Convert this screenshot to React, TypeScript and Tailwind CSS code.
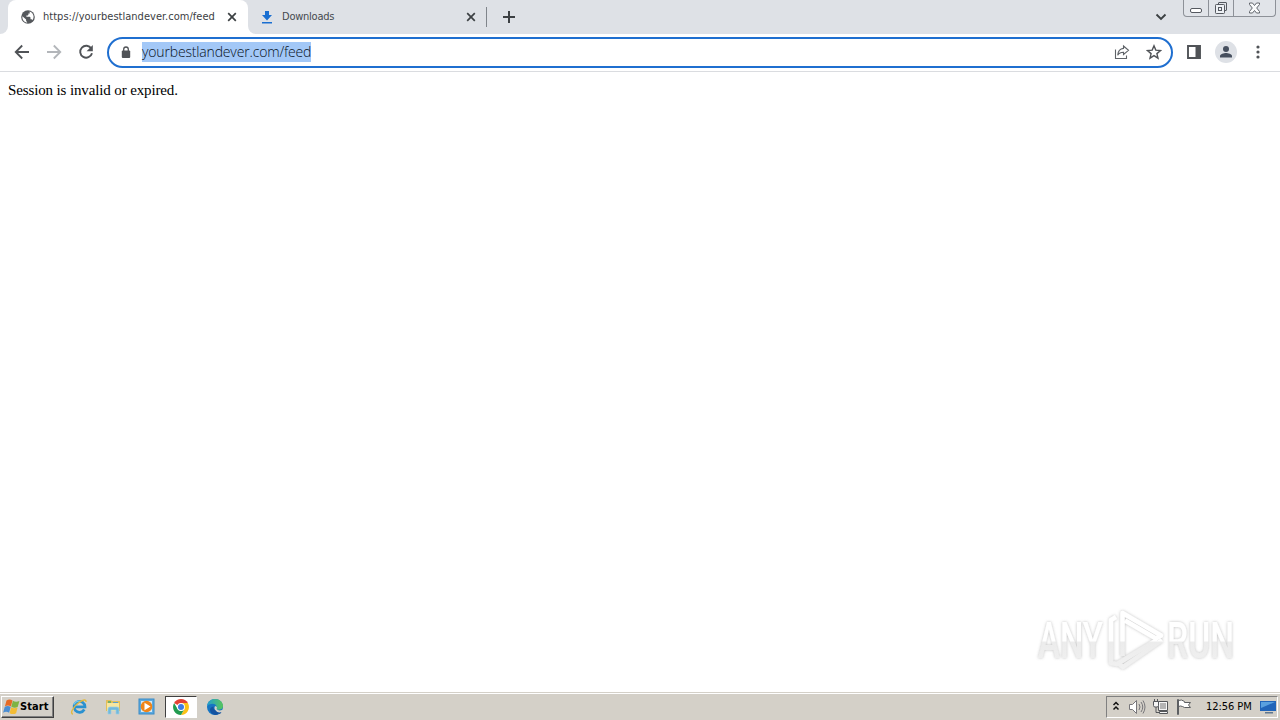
import React from "react";

const ui = "font-['DejaVu_Sans_Condensed','DejaVu_Sans',sans-serif]";

function Close() {
  return (
    <svg width="10" height="10" viewBox="0 0 10 10" className="shrink-0">
      <path d="M1.2 1.2l7.6 7.6M8.8 1.2L1.2 8.8" stroke="#3c4043" strokeWidth="1.7" />
    </svg>
  );
}

function TabStrip() {
  return (
    <div className="flex h-[34px] shrink-0 bg-[#dee1e6]">
      <div className="flex w-2 items-end bg-white">
        <div className="h-full w-2 rounded-br-lg bg-[#dee1e6]" />
      </div>
      <div className="bg-[#dee1e6]">
        <div className="flex h-[34px] w-[240px] items-center rounded-t-lg bg-white pl-[13px]">
          <svg width="14" height="14" viewBox="0 0 14 14" className="shrink-0">
            <circle cx="7" cy="7" r="6.8" fill="#55585c" />
            <path d="M1.4 6.2l3.7 3.3v1.2l1.2 1.9C3.4 12.4 1 9.8 1.4 6.2zM8.6 1.5c2.4.7 4 2.8 4 5.3 0 1.3-.4 2.5-1.1 3.4-.3-.7-.7-1-1.5-1h-.5V7.4L8.8 6.8H5.4V5.4h1.3l.7-.7V3.400h1.4z" fill="#fff" />
          </svg>
          <span className={`${ui} ml-2 w-[184px] whitespace-nowrap text-[11px] leading-4 tracking-[0.02px] text-[#3c4043]`}>
            https://yourbestlandever.com/feed
          </span>
          <Close />
        </div>
      </div>
      <div className="flex w-2 bg-white">
        <div className="h-full w-2 rounded-bl-lg bg-[#dee1e6]" />
      </div>
      <div className="flex items-center pl-[5px]">
        <svg width="12" height="13" viewBox="0 0 12 13">
          <path d="M4 0h4v4h3L6 9.4 1 4h3zM1 11h10v1.500H1z" fill="#1a6fd1" />
        </svg>
        <span className={`${ui} ml-[9px] w-[184px] text-[11px] leading-4 tracking-[-0.24px] text-[#45494e]`}>Downloads</span>
        <Close />
        <div className="ml-[10px] h-5 w-px bg-[#80858b]" />
        <svg width="14" height="14" viewBox="0 0 14 14" className="ml-[15px]">
          <path d="M7 1v12M1 7h12" stroke="#3c4043" strokeWidth="2" />
        </svg>
      </div>
      <div className="flex-1" />
      <div className="flex items-center">
        <svg width="12" height="8" viewBox="0 0 12 8">
          <path d="M1.500 1.500L6 6l4.500-4.500" fill="none" stroke="#3c4043" strokeWidth="1.900" />
        </svg>
      </div>
      <div className="ml-4 mr-[4px] flex h-[17px] w-[93px] rounded-b-[4px] border border-t-0 border-[#8d9198] bg-[#e1e4e9]">
        <div className="flex w-[25px] items-end justify-center border-r border-[#8d9198] pb-[3px]">
          <div className="h-[5px] w-3 rounded-[2px] border border-[#555960] bg-white" />
        </div>
        <div className="flex w-[25px] justify-center border-r border-[#8d9198] pt-[1px]">
          <svg width="14" height="14" viewBox="0 0 14 14" fill="none" stroke="#555960">
            <path d="M4.500 3.500v-1.500q0-.5.5-.5h7q.5 0 .5.5v7q0 .5-.5.5h-1.500" />
            <rect x="1.500" y="3.500" width="9" height="9" rx=".8" fill="#edf0f4" />
            <rect x="4.500" y="6.500" width="3" height="3" />
          </svg>
        </div>
        <div className="flex flex-1 justify-center pt-[2px]">
          <svg width="13" height="12" viewBox="0 0 13 12">
            <path d="M1.500 1h3l2 2.500L8.500 1h3v1.500L8.700 6l2.800 3.500V11h-3l-2-2.500-2 2.500h-3V9.500L4.300 6 1.500 2.500z" fill="#fafbfc" stroke="#62666d" />
          </svg>
        </div>
      </div>
    </div>
  );
}

function Toolbar() {
  return (
    <div className="flex h-[38px] shrink-0 items-center border-b border-[#dadce0] bg-white pl-[14px] pr-3">
      <svg width="16" height="16" viewBox="0 0 16 16" fill="none" stroke="#505357" strokeWidth="1.800" className="mb-px">
        <path d="M15 8H2M8.200 1.500L1.700 8l6.500 6.500" />
      </svg>
      <svg width="16" height="16" viewBox="0 0 16 16" fill="none" stroke="#b3b6ba" strokeWidth="1.800" className="mb-px ml-4">
        <path d="M1 8h13M7.800 1.500L14.300 8l-6.500 6.500" />
      </svg>
      <svg width="16" height="16" viewBox="0 0 16 16" className="mb-px ml-4">
        <path d="M13.300 4.500A6 6 0 1 0 14 9.300" fill="none" stroke="#505357" strokeWidth="1.900" />
        <path d="M14.800 1v6.200H8.600z" fill="#505357" />
      </svg>
      <div className="ml-[13px] flex h-[31px] w-[1066px] items-center rounded-full border-2 border-[#1f6fd0] bg-white pl-[12px] pr-[9px]">
        <svg width="10" height="13" viewBox="0 0 10 13" className="shrink-0">
          <path d="M2.700 5V3.300a2.300 2.300 0 0 1 4.600 0V5" fill="none" stroke="#505357" strokeWidth="1.300" />
          <rect x=".8" y="4.600" width="8.400" height="7.400" rx="1" fill="#505357" />
        </svg>
        <span className="mb-px ml-[11px] h-5 w-[169px] whitespace-nowrap bg-[#a3c8f7] font-['Open_Sans','Noto_Sans',sans-serif] text-[14px] font-light leading-5 tracking-[-0.16px] text-[#07111c]">
          yourbestlandever.com/feed
        </span>
        <div className="flex-1" />
        <svg width="16" height="16" viewBox="0 0 16 16" fill="none" stroke="#5f6368" strokeWidth="1.100" className="mb-px">
          <path d="M1.500 5.500v9h11v-3M9.500 2l5 4.300-5 4.200V8.200C6.500 8.200 5 9 3.700 11.200 4 7.500 6 4.800 9.500 4.400z" />
        </svg>
        <svg width="16" height="16" viewBox="0 0 16 16" className="mb-px ml-4" fill="none" stroke="#505357" strokeWidth="1.400">
          <path d="M8 1.800l1.800 4.300 4.700.4-3.600 3.100 1.100 4.600L8 11.700l-4 2.500 1.100-4.600-3.600-3.100 4.700-.4z" />
        </svg>
      </div>
      <svg width="14" height="14" viewBox="0 0 14 14" className="mb-px ml-[14px]">
        <path d="M1 1h12v12H1z" fill="none" stroke="#505357" strokeWidth="1.900" />
        <path d="M8.500 1H13v12H8.500z" fill="#505357" />
      </svg>
      <svg width="22" height="22" viewBox="0 0 22 22" className="mb-px ml-[14px]">
        <circle cx="11" cy="11" r="11" fill="#dee1e6" />
        <circle cx="11" cy="7.900" r="3" fill="#47505f" />
        <path d="M5 16.500v-1.600c0-2 4-3 6-3s6 1 6 3v1.600z" fill="#47505f" />
      </svg>
      <svg width="4" height="16" viewBox="0 0 4 16" className="mb-px ml-[19px]" fill="#505357">
        <circle cx="2" cy="3" r="1.600" /><circle cx="2" cy="8" r="1.600" /><circle cx="2" cy="13" r="1.600" />
      </svg>
    </div>
  );
}

function Watermark() {
  return (
    <svg width="208" height="72" viewBox="0 0 208 72" className="overflow-visible">
      <defs>
        <linearGradient id="mark" x1="0" y1="0" x2="0" y2="72" gradientUnits="userSpaceOnUse">
          <stop offset="0" stopColor="#fff" /><stop offset=".53" stopColor="#fff" />
          <stop offset=".54" stopColor="#ececec" /><stop offset="1" stopColor="#f2f2f2" />
        </linearGradient>
        <filter id="glow" x="-10%" y="-20%" width="120%" height="140%">
          <feDropShadow dx="0" dy="0" stdDeviation="1.600" floodColor="#777" floodOpacity=".48" />
        </filter>
      </defs>
      <g filter="url(#glow)">
        <g fill="url(#mark)" className="font-['Roboto',sans-serif] text-[50px] font-medium">
          <text x="8" y="55" textLength="65" lengthAdjust="spacingAndGlyphs">ANY</text>
          <text x="137" y="55" textLength="67" lengthAdjust="spacingAndGlyphs">RUN</text>
        </g>
        <g fill="none" stroke="url(#mark)" strokeWidth="4.500" strokeLinejoin="round">
          <path d="M86 14l-5 3v43l6 1 40-24" />
          <path d="M92.500 53V10L131 32.500l-5 3L95 17.500" />
          <path d="M132 37L93 64l-4-3" />
        </g>
      </g>
    </svg>
  );
}

function Flag() {
  return (
    <svg width="17" height="16" viewBox="0 0 17 16" className="shrink-0">
      <path d="M3.500 1.500q3-2 6 0L7.900 7.500q-3-2-6 0z" fill="#e66a25" />
      <path d="M9.900 1.800q3 1.800 6.500.2l-1.600 5.800q-3 1.800-6.500 0z" fill="#7eb343" />
      <path d="M1.700 8q3-2 6 0l-1.600 5.800q-3-2-6 0z" fill="#4b8ed3" />
      <path d="M8.100 8.200q3 1.800 6.500.2l-1.500 5.800q-3 1.800-6.500 0z" fill="#f3bc34" />
    </svg>
  );
}

function Taskbar() {
  return (
    <div className="flex h-[28px] shrink-0 items-center border-t border-[#d4d0c8] bg-[#d4d0c8] pl-[1px] pr-[2px] shadow-[inset_0_1px_0_#fff]">
      <div className="mt-px flex h-[22px] w-[53px] items-center border border-b-[#404040] border-l-white border-r-[#404040] border-t-white bg-[#d4d0c8] pl-[1px] shadow-[inset_-1px_-1px_0_#808080]">
        <Flag />
        <span className={`${ui} text-[11px] font-bold leading-4 tracking-[0.1px] text-black`}>Start</span>
      </div>
      <svg width="18" height="18" viewBox="0 0 18 18" className="ml-4 mt-px">
        <path d="M14.300 11.500A5.500 5.500 0 1 1 15 8.800H5" fill="none" stroke="#2a91d0" strokeWidth="2.700" />
        <path d="M3.700 6.500A6 6 0 0 1 11 3.500" fill="none" stroke="#75c9ed" strokeWidth="1.500" />
        <path d="M3 16C-.5 16 3 8.500 9 4.500c4-3 7.500-3.500 7-.5" fill="none" stroke="#e3b93e" strokeWidth="1.400" />
      </svg>
      <svg width="18" height="18" viewBox="0 0 18 18" className="ml-4 mt-px">
        <path d="M2 4V2h5l1 1h8v10H2z" fill="#e2bf5b" />
        <path d="M3 5h12v8H3z" fill="#f7e6a0" />
        <path d="M4 3h3v2H4z" fill="#77af68" /><path d="M9 4h5v1H9z" fill="#5b9fcc" />
        <path d="M4 16v-5q0-2 2-2h7q2 0 2 2v5h-3v-4H7v4z" fill="#72b9dc" stroke="#9bcfe4" strokeWidth=".7" />
      </svg>
      <svg width="18" height="18" viewBox="0 0 18 18" className="ml-4 mt-px">
        <rect x="1" y="1" width="15" height="15" fill="#5baae0" stroke="#398ac6" />
        <rect x="3" y="3" width="11" height="11" fill="#d4eaf7" />
        <circle cx="8.500" cy="8.500" r="5.800" fill="#ef8519" /><path d="M6.500 4.800l6 3.700-6 3.700z" fill="#fff" />
      </svg>
      <div className="ml-[9px] mt-px flex h-[22px] w-8 items-center justify-center border border-b-white border-l-[#404040] border-r-white border-t-[#404040] bg-white">
        <svg width="16" height="16" viewBox="0 0 16 16">
          <path d="M8 8L1.100 4A8 8 0 0 1 14.900 4z" fill="#e34133" />
          <path d="M8 4h6.900A8 8 0 0 1 8 16l3.500-6z" fill="#fbc116" />
          <path d="M1.100 4L4.600 10 8 12l3.400-2L8 16A8 8 0 0 1 1.100 4z" fill="#229b50" />
          <circle cx="8" cy="8" r="3.900" fill="#fff" /><circle cx="8" cy="8" r="3" fill="#3e7ce4" />
        </svg>
      </div>
      <svg width="18" height="18" viewBox="0 0 18 18" className="ml-[9px] mt-px">
        <defs><linearGradient id="edge"><stop stopColor="#229ed0" /><stop offset="1" stopColor="#58c65a" /></linearGradient></defs>
        <circle cx="9" cy="9" r="8" fill="#1675c3" />
        <path d="M1 8C2 3 5 1 9 1c5 0 8 3.500 8 7 0 4-6 5-7 2.500L10.500 8Q9 5 5 6 2 6.500 1 8z" fill="url(#edge)" />
        <path d="M7.500 8.500C7 12 11 15 15.800 13Q13 17 9 17 4.500 16 4 12q0-3 3.500-3.500z" fill="#1453a1" />
        <path d="M9 8q3 1 1.500 3 2 2.500 6.500.5v4H13Q10 14 9 12 7.800 10 9 8z" fill="#d4d0c8" />
        <path d="M8.500 11.500q3 4 7 2.500l-1.500 2-4-1z" fill="#1453a1" />
      </svg>
      <div className="flex-1" />
      <div className="mt-px flex h-[22px] w-[172px] items-center border border-b-white border-l-[#808080] border-r-white border-t-[#808080] pl-[5px]">
        <svg width="8" height="10" viewBox="0 0 8 10" className="mb-[2px] shrink-0">
          <path d="M1.500 4L4 1.500 6.500 4M1.500 8.500L4 6l2.500 2.500" stroke="#111" fill="none" strokeWidth="1.500" />
        </svg>
        <svg width="18" height="18" viewBox="0 0 18 18" className="ml-2 shrink-0" fill="none" stroke="#77767a">
          <path d="M1.500 6.500h3l4-4v13l-4-4h-3z" fill="#fff" /><path d="M11 6q2 3 0 6M13 4q3.500 5 0 10M15 2.500q4 6.500 0 13" />
        </svg>
        <svg width="18" height="18" viewBox="0 0 18 18" className="ml-[6px] shrink-0" fill="#f5f5f5" stroke="#55575a">
          <path d="M6.500 3.500h9v9h-9z" /><path d="M8 5h6v6H8z" fill="#b4b4b4" stroke="none" /><path d="M7.500 15.500h8v-2h-8z" />
          <path d="M1.500 3.500h5v4q0 1.500-1.500 1.500H3q-1.500 0-1.500-1.500zM2.500 1v2.500M5.500 1v2.500" /><path d="M4 9v5.500h3" fill="none" />
        </svg>
        <svg width="18" height="18" viewBox="0 0 18 18" className="ml-[5px] shrink-0" fill="#fff" stroke="#5d5f62">
          <path d="M3.500 2.500q3-1.500 6 1v1h6l-2 2.500 2 2.500h-6l-2-1q-2-1-4 0M2.500 1.500h1v15h-1z" />
        </svg>
        <span className={`${ui} ml-[13px] w-[54px] whitespace-nowrap text-[11px] leading-4 tracking-[-0.05px] text-black`}>12:56 PM</span>
        <svg width="16" height="14" viewBox="0 0 16 14" className="shrink-0">
          <path d="M0 1h16v10H0z" fill="#2265b9" /><path d="M1 2h14L1 8z" fill="#5aa0df" />
          <path d="M5 12h8v1.500H5z" fill="#5e7791" />
        </svg>
      </div>
    </div>
  );
}

export default function App() {
  return (
    <div className="flex h-[720px] w-[1280px] flex-col overflow-hidden bg-white">
      <TabStrip />
      <Toolbar />
      <main className="flex min-h-0 flex-1 flex-col justify-between pl-2 pt-[9px]">
        <p className="font-['Liberation_Serif',serif] text-[15px] leading-[18px] tracking-[-0.13px] text-black">Session is invalid or expired.</p>
        <div className="mb-[17px] mr-[42px] flex self-end"><Watermark /></div>
      </main>
      <Taskbar />
    </div>
  );
}
